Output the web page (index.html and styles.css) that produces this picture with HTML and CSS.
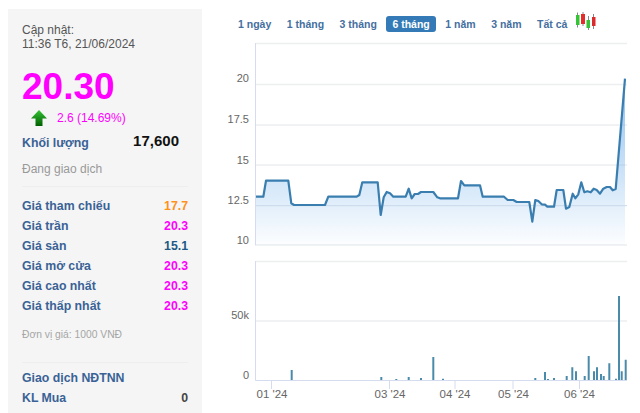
FILE: index.html
```html
<!DOCTYPE html>
<html lang="vi">
<head>
  <meta charset="UTF-8" />
  <title>Biểu đồ giá</title>
  <link rel="stylesheet" href="styles.css">
</head>
<body>
  <aside class="panel">
    <div class="updated">Cập nhật:<br>11:36 T6, 21/06/2024</div>
    <div class="price">20.30</div>
    <div class="change">
      <svg class="arrow" width="18" height="18" viewBox="0 0 18 18">
        <defs>
          <linearGradient id="arrowFill" x1="0" y1="0" x2="0" y2="1">
            <stop offset="0" stop-color="#35c435"/>
            <stop offset="1" stop-color="#005f00"/>
          </linearGradient>
        </defs>
        <path d="M9 1 L17 9.500 H12.500 V17 H5.500 V9.500 H1 Z" fill="url(#arrowFill)"/>
      </svg>
      <span>2.6 (14.69%)</span>
    </div>
    <div class="volume"><span class="volume-label">Khối lượng</span><span class="volume-value">17,600</span></div>
    <div class="status">Đang giao dịch</div>

    <div class="rows">
      <div class="row"><span>Giá tham chiếu</span><span class="orange">17.7</span></div>
      <div class="row"><span>Giá trần</span><span class="pink">20.3</span></div>
      <div class="row"><span>Giá sàn</span><span class="blue">15.1</span></div>
      <div class="row"><span>Giá mở cửa</span><span class="pink">20.3</span></div>
      <div class="row"><span>Giá cao nhất</span><span class="pink">20.3</span></div>
      <div class="row"><span>Giá thấp nhất</span><span class="pink">20.3</span></div>
    </div>
    <div class="unit">Đơn vị giá: 1000 VNĐ</div>

    <div class="foreign">
      <div class="foreign-title">Giao dịch NĐTNN</div>
      <div class="row"><span>KL Mua</span><span class="dark">0</span></div>
      <div class="row"><span>KL Bán</span><span class="dark">0</span></div>
    </div>
  </aside>

  <main class="chart">
    <nav class="tabs">
      <a class="tab">1 ngày</a>
      <a class="tab">1 tháng</a>
      <a class="tab">3 tháng</a>
      <a class="tab active">6 tháng</a>
      <a class="tab">1 năm</a>
      <a class="tab">3 năm</a>
      <a class="tab">Tất cả</a>
      <svg class="candles" width="22" height="20" viewBox="575 13 22 20">
        <path d="M576.500 13.500V28.500M582 13V27M587.500 17V31M592.500 15V30" stroke="#888" stroke-width="1" fill="none"/>
        <rect x="575" y="16" width="3.500" height="10" fill="#35c435"/>
        <rect x="580" y="15" width="4" height="10" fill="#e52b2b"/>
        <rect x="585.500" y="21" width="3.500" height="8" fill="#35c435"/>
        <rect x="591" y="18" width="3.500" height="9" fill="#d92b2b"/>
      </svg>
    </nav>

    <svg class="plot" width="438" height="377" viewBox="202 36 438 377">
      <defs>
        <linearGradient id="areaFill" gradientUnits="userSpaceOnUse" x1="0" y1="80" x2="0" y2="245">
          <stop offset="0" stop-color="#7cb5ec" stop-opacity="0.85"/>
          <stop offset="0.6" stop-color="#7cb5ec" stop-opacity="0.35"/>
          <stop offset="1" stop-color="#7cb5ec" stop-opacity="0.02"/>
        </linearGradient>
      </defs>

      <!-- price -->
      <path class="grid" d="M256 43.500H627M256 84.500H627M256 125H627M256 165H627M256 245H627"/>
      <path class="area" d="M256 196.700L263.300 196.700 266 180.700 288.300 180.700 291.300 203.300 294 205 325 205 328.300 196.700 356.700 196.700 359.300 195 362.300 182.300 377.700 182.300 380.700 215 383.700 197.300 386.700 192 390 193.300 393.300 196.700 405.700 196.700 408.700 188.700 411.700 198.300 414.700 194 418 194 421 192 433.300 192 437.300 197.300 440 198.300 458 198.300 461 181 464.300 185.300 480 185.300 482.700 196.700 504 196.700 507.700 200 513.300 200 516.700 202 529.300 202 532.300 221.700 535.300 200 538.300 201 541.700 204.300 545 204.700 547.300 206.700 554 206.700 556.700 190 563.300 190 566 208.700 569.300 207 572.700 193.700 575.300 198.300 578.300 194.300 581.300 182.300 584.300 192.300 587.300 191.300 590.700 192.300 593.700 188.700 596.700 190 600 193.700 603.300 188.700 606.700 187 610 187 612.700 190.300 615.700 189 625 78.700V245H256Z"/>
      <path class="grid-over" d="M256 205.700H627"/>
      <path class="line" d="M256 196.700L263.300 196.700 266 180.700 288.300 180.700 291.300 203.300 294 205 325 205 328.300 196.700 356.700 196.700 359.300 195 362.300 182.300 377.700 182.300 380.700 215 383.700 197.300 386.700 192 390 193.300 393.300 196.700 405.700 196.700 408.700 188.700 411.700 198.300 414.700 194 418 194 421 192 433.300 192 437.300 197.300 440 198.300 458 198.300 461 181 464.300 185.300 480 185.300 482.700 196.700 504 196.700 507.700 200 513.300 200 516.700 202 529.300 202 532.300 221.700 535.300 200 538.300 201 541.700 204.300 545 204.700 547.300 206.700 554 206.700 556.700 190 563.300 190 566 208.700 569.300 207 572.700 193.700 575.300 198.300 578.300 194.300 581.300 182.300 584.300 192.300 587.300 191.300 590.700 192.300 593.700 188.700 596.700 190 600 193.700 603.300 188.700 606.700 187 610 187 612.700 190.300 615.700 189 625 78.700"/>
      <path class="axis" d="M255.500 43V245.500"/>
      <g class="label end">
        <text x="249" y="82">20</text>
        <text x="249" y="123">17.5</text>
        <text x="249" y="163.500">15</text>
        <text x="249" y="204">12.5</text>
        <text x="249" y="244">10</text>
      </g>

      <!-- volume -->
      <path class="grid" d="M256 261.500H627M256 321H627"/>
      <path class="axis" d="M255.500 261V380.500H627M271.500 380V389M389.500 380V389M455 380V389M513 380V389M579.500 380V389"/>
      <path class="bars" d="M291.700 370V380M381.300 377V380M396.300 379V380M408.700 377V380M421 378V380M433.300 357V380M443 378.700V380M535.300 378V380M545 372V380M548 379V380M554 378V380M566.700 376V380M572.300 367.300V380M576 371.300V380M584.700 376V380M588.700 356V380M594 371.300V380M597 367.300V380M601 374V380M603.700 376V380M609.300 363.300V380M616 378.700V380M619 296V380M621.700 371.300V380M625.700 359.700V380"/>
      <g class="label end">
        <text x="249" y="319">50k</text>
        <text x="249" y="378.500">0</text>
      </g>
      <g class="label mid">
        <text x="272" y="398">01 '24</text>
        <text x="390" y="398">03 '24</text>
        <text x="455" y="398">04 '24</text>
        <text x="513.500" y="398">05 '24</text>
        <text x="579.500" y="398">06 '24</text>
      </g>
    </svg>
  </main>
</body>
</html>
```

FILE: styles.css
```css
html, body {
  height: 413px;
  overflow: hidden;
}
body {
  margin: 0;
  display: flex;
  font-family: "Liberation Sans", Arial, sans-serif;
  background: #fff;
  color: #333;
}

.panel {
  width: 166px;
  margin: 9px 0 0 8px;
  padding: 14px 14px 0;
  background: #f5f5f5;
  flex-shrink: 0;
}
.updated {
  font-size: 12px;
  line-height: 14px;
  color: #555;
}
.price {
  margin-top: 15px;
  font-size: 37px;
  line-height: 42px;
  font-weight: bold;
  color: #ff00ff;
}
.change {
  display: flex;
  align-items: center;
  gap: 9px;
  height: 18px;
  margin: 1px 0 0 8px;
  font-size: 12px;
  color: #ff00ff;
}
.volume {
  display: flex;
  justify-content: space-between;
  align-items: center;
  height: 20px;
  margin-top: 6px;
  padding-right: 9px;
}
.volume-label {
  font-size: 12.300px;
  font-weight: bold;
  color: #3a6296;
}
.volume-value {
  margin-bottom: 6px;
  font-size: 15px;
  font-weight: bold;
  color: #111;
}
.status {
  margin-top: 8px;
  padding-bottom: 9px;
  font-size: 12px;
  line-height: 16px;
  color: #999;
  border-bottom: 1px solid #eee;
}

.rows {
  margin-top: 9px;
}
.row {
  display: flex;
  justify-content: space-between;
  height: 20px;
  line-height: 20px;
  font-size: 12.300px;
  font-weight: bold;
  color: #3a6296;
}
.orange { color: #ff9119; }
.pink { color: #ff00ff; }
.blue { color: #1c5a85; }
.dark { color: #444; }
.unit {
  margin-top: 12px;
  padding-bottom: 20px;
  font-size: 10.300px;
  line-height: 14px;
  color: #a5a5a5;
  border-bottom: 1px solid #eee;
}
.foreign {
  margin-top: 5px;
}
.foreign-title {
  height: 20px;
  line-height: 20px;
  font-size: 12.300px;
  font-weight: bold;
  color: #3a6296;
}

.chart {
  flex: 1;
}
.tabs {
  display: flex;
  align-items: center;
  gap: 3.500px;
  height: 16px;
  margin: 16px 0 0 30px;
}
.tab {
  padding: 0 6px;
  font-size: 10.500px;
  line-height: 16px;
  font-weight: bold;
  color: #456f9f;
  border-radius: 3px;
}
.tab.active {
  background: #337ab7;
  color: #fff;
}
.candles {
  margin: -4px 0 0 -1px;
}
.plot {
  display: block;
  margin-top: 4px;
}
.grid {
  fill: none;
  stroke: #eceef0;
  stroke-width: 1.500;
}
.grid-over {
  fill: none;
  stroke: #c9d9ea;
  stroke-width: 1;
}
.area {
  fill: url(#areaFill);
}
.line {
  fill: none;
  stroke: #3a7eb0;
  stroke-width: 2.200;
  stroke-linejoin: round;
}
.axis {
  fill: none;
  stroke: #d5dcef;
  stroke-width: 1;
}
.bars {
  fill: none;
  stroke: #4a8bab;
  stroke-width: 2;
}
.label {
  font-size: 11px;
  fill: #666;
}
.label.end { text-anchor: end; }
.label.mid {
  font-size: 11.500px;
  text-anchor: middle;
}
```
